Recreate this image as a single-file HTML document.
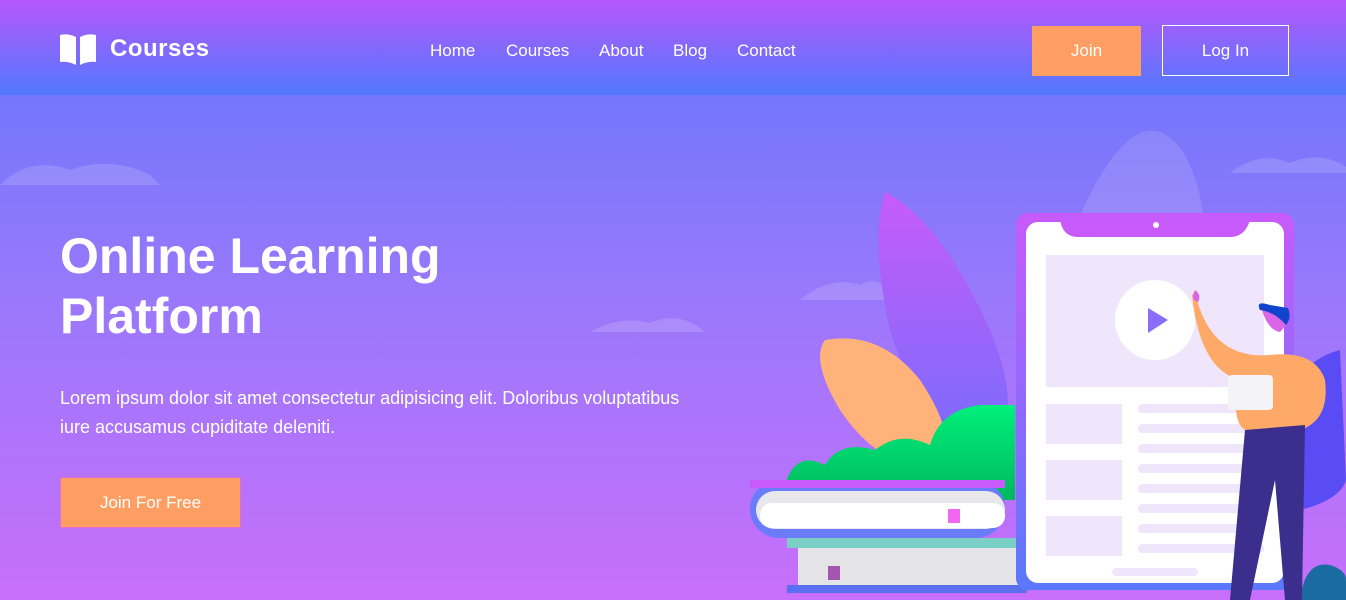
<!DOCTYPE html>
<html><head><meta charset="utf-8"><style>
*{margin:0;padding:0;box-sizing:border-box}
body{width:1346px;height:600px;overflow:hidden;font-family:"Liberation Sans",sans-serif;position:relative;background:linear-gradient(180deg,#7377fb 95px,#9a78fb 300px,#c86ffb 600px)}
header{position:absolute;left:0;top:0;width:1346px;height:95px;background:linear-gradient(180deg,#b657fc,#5279fd)}
.logo{position:absolute;left:60px;top:33px;color:#fff;font-weight:bold;font-size:24px;display:flex;align-items:center;gap:14px;letter-spacing:0.5px}
nav{position:absolute;left:430px;top:41px;color:#fff;font-size:17px;white-space:nowrap}
nav span{position:absolute;top:0}
.join{position:absolute;left:1032px;top:26px;width:109px;height:50px;background:#ff9e62;color:#fff;font-size:17px;display:flex;align-items:center;justify-content:center}
.login{position:absolute;left:1162px;top:25px;width:127px;height:51px;border:1px solid #fff;color:#fff;font-size:17px;display:flex;align-items:center;justify-content:center}
h1{position:absolute;left:60px;top:226px;color:#fff;font-size:50px;line-height:60px;font-weight:bold}
p{position:absolute;left:60px;top:384px;color:#fff;font-size:18px;line-height:29px;width:700px;white-space:nowrap}
.free{position:absolute;left:60px;top:477px;width:181px;height:51px;background:#ff9e62;border:1px solid #e06fd0;color:#fff;font-size:17px;display:flex;align-items:center;justify-content:center}
</style></head><body>
<svg style="position:absolute;left:0;top:95px" width="1346" height="505">
<path d="M0 90 Q30 60 70 75 Q110 60 150 80 L160 90Z" fill="#ffffff" opacity=".15"/>
<path d="M1230 78 Q1260 55 1290 68 Q1320 55 1346 72 L1346 78Z" fill="#fff" opacity=".15"/>
<path d="M590 237 Q620 220 650 228 Q680 215 705 237Z" fill="#fff" opacity=".15"/>
<path d="M800 205 Q830 180 860 190 Q880 178 900 205Z" fill="#fff" opacity=".15"/>
<path d="M1080 120 Q1140 -10 1185 60 Q1210 110 1200 150 L1080 150Z" fill="#fff" opacity=".12"/>
</svg>
<header></header>
<div class="logo"><svg width="36" height="32" viewBox="0 0 36 32"><path d="M0 2 Q8 0 16 4 L16 32 Q8 28 0 29Z M20 4 Q28 0 36 2 L36 29 Q28 28 20 32Z" fill="#fff"/></svg>Courses</div>
<nav><span style="left:0">Home</span><span style="left:76px">Courses</span><span style="left:169px">About</span><span style="left:243px">Blog</span><span style="left:307px">Contact</span></nav>
<div class="join">Join</div><div class="login">Log In</div>
<h1>Online Learning<br>Platform</h1>
<p>Lorem ipsum dolor sit amet consectetur adipisicing elit. Doloribus voluptatibus<br>iure accusamus cupiditate deleniti.</p>
<div class="free">Join For Free</div>
<svg style="position:absolute;left:740px;top:180px" width="606" height="420">
<defs><linearGradient id="lf" x1="0" y1="0" x2="0" y2="1"><stop offset="0" stop-color="#c65cfa"/><stop offset="1" stop-color="#7a6bfb"/></linearGradient>
<linearGradient id="tb" x1="0" y1="0" x2="0" y2="1"><stop offset="0" stop-color="#c85afb"/><stop offset="1" stop-color="#5a78fc"/></linearGradient>
<linearGradient id="gr" x1="0" y1="0" x2="0" y2="1"><stop offset="0" stop-color="#00f07a"/><stop offset="1" stop-color="#00b860"/></linearGradient></defs>
<path d="M145 12 Q200 40 250 150 Q290 250 240 260 Q180 250 150 150 Q130 60 145 12Z" fill="url(#lf)"/>
<path d="M600 170 Q560 180 540 230 Q520 300 560 330 Q600 320 606 300Z" fill="#5a4cf5"/>
<path d="M85 160 Q140 150 180 200 Q220 260 200 290 Q140 290 100 230 Q70 180 85 160Z" fill="#ffb27a"/>
<path d="M45 305 Q55 270 85 285 Q100 260 135 270 Q160 250 190 265 Q200 230 240 225 L275 225 L275 320 L45 320Z" fill="url(#gr)"/>
<rect x="10" y="300" width="255" height="58" rx="29" fill="#6a7bfb"/>
<rect x="16" y="311" width="249" height="38" rx="19" fill="#e8e8ea"/>
<rect x="20" y="323" width="245" height="25" rx="12" fill="#fff"/>
<rect x="10" y="300" width="255" height="8" fill="#c85afb"/>
<rect x="208" y="329" width="12" height="14" fill="#f066f0"/>
<rect x="47" y="358" width="230" height="10" fill="#7ccfc7"/>
<rect x="58" y="368" width="220" height="38" fill="#e4e4e6"/>
<rect x="88" y="386" width="12" height="14" fill="#a355b0"/>
<rect x="47" y="405" width="240" height="8" fill="#5a70f0"/>
<rect x="276" y="33" width="278" height="377" rx="12" fill="url(#tb)"/>
<rect x="286" y="42" width="258" height="361" rx="12" fill="#fff"/>
<path d="M320 40 L510 40 Q505 57 490 57 L338 57 Q323 57 320 40Z" fill="#c85afb"/>
<circle cx="416" cy="45" r="3" fill="#fff"/>
<rect x="306" y="75" width="218" height="132" fill="#efe6fc"/>
<circle cx="415" cy="140" r="40" fill="#fff"/>
<path d="M408 128 L428 140 L408 153Z" fill="#8a6ef8"/>
<rect x="306" y="224" width="76" height="40" fill="#efe6fc"/>
<rect x="306" y="280" width="76" height="40" fill="#efe6fc"/>
<rect x="306" y="336" width="76" height="40" fill="#efe6fc"/>
<g fill="#efe6fc"><rect x="398" y="224" width="126" height="9" rx="4"/><rect x="398" y="244" width="126" height="9" rx="4"/><rect x="398" y="264" width="126" height="9" rx="4"/><rect x="398" y="284" width="126" height="9" rx="4"/><rect x="398" y="304" width="126" height="9" rx="4"/><rect x="398" y="324" width="126" height="9" rx="4"/><rect x="398" y="344" width="126" height="9" rx="4"/><rect x="398" y="364" width="126" height="9" rx="4"/><rect x="372" y="388" width="86" height="8" rx="4"/></g>
<path d="M560 420 Q565 380 590 385 Q606 390 606 400 L606 420Z" fill="#1a6ba0"/>
<path d="M455 112 Q470 180 530 175 Q575 170 585 200 Q590 240 560 250 L505 250 Q490 240 500 200 Q460 190 452 115Z" fill="#ffa968"/>
<rect x="488" y="195" width="45" height="35" rx="4" fill="#f4f4f6"/>
<path d="M505 250 L565 245 L562 420 L545 420 L535 300 L510 420 L490 420Z" fill="#3b2e8c"/>
<path d="M522 130 Q528 150 540 152 Q552 140 548 130Z" fill="#d966e6"/>
<path d="M520 130 Q515 120 530 125 L548 128 Q552 138 546 145 Q535 132 520 130Z" fill="#1144cc"/>
<path d="M455 110 Q450 120 458 122 Q462 115 455 110Z" fill="#d966e6"/>
</svg>
</body></html>
